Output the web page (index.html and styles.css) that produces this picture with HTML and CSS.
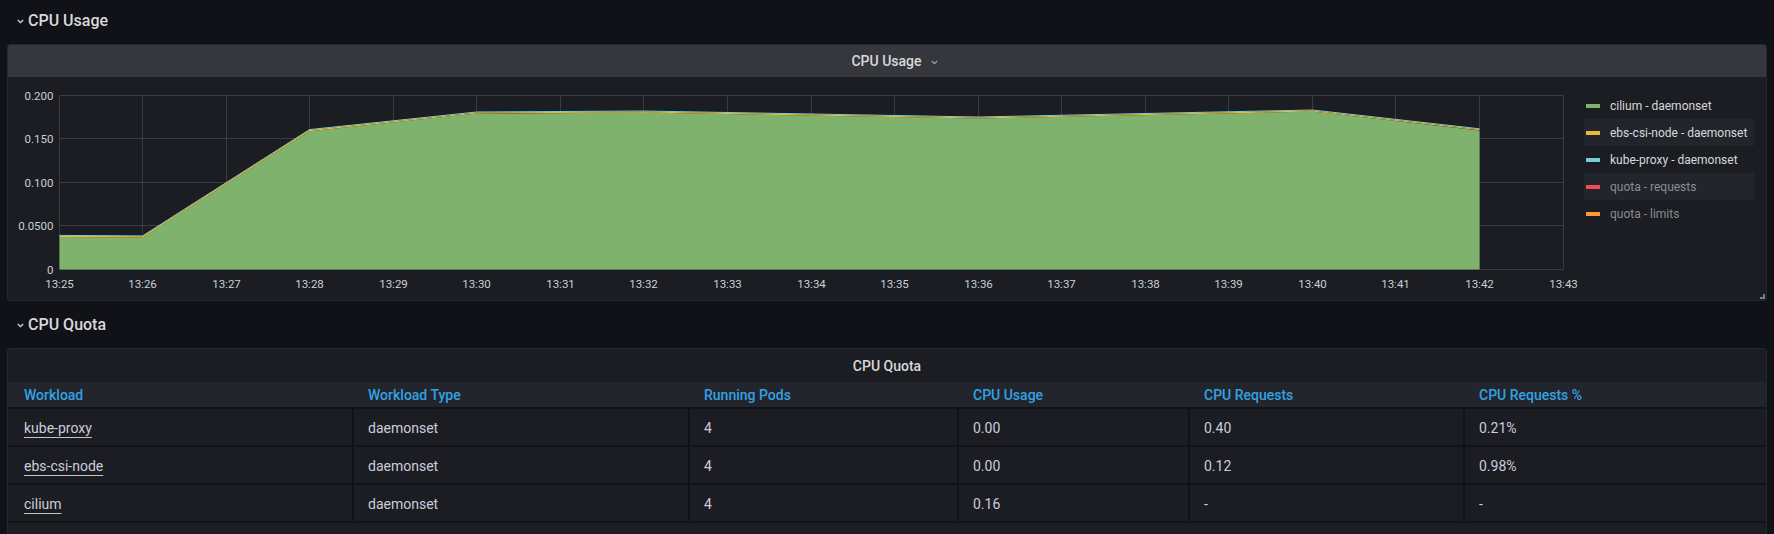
FILE: index.html
```html
<!DOCTYPE html>
<html>
<head>
<meta charset="utf-8">
<title>CPU</title>
<link rel="stylesheet" href="styles.css">
</head>
<body>
<div class="dash">
  <div class="row-head">
    <svg class="row-chev" width="7" height="5" viewBox="0 0 7 5"><polyline points="0.8,1 3.5,3.7 6.2,1"/></svg>
    <span class="row-title">CPU Usage</span>
  </div>

  <section class="panel panel-graph">
    <header class="panel-head">
      <span class="panel-title">CPU Usage</span>
      <svg class="title-chev" width="7" height="5" viewBox="0 0 7 5"><polyline points="0.8,1 3.5,3.7 6.2,1"/></svg>
    </header>
    <div class="graph-body">
      <svg class="plot" width="1570" height="223" viewBox="8 77 1570 223">
        <g class="grid">
          <line x1="59.5" y1="95.5" x2="59.5" y2="269.5"/>
          <line x1="142.5" y1="95.5" x2="142.5" y2="269.5"/>
          <line x1="226.5" y1="95.5" x2="226.5" y2="269.5"/>
          <line x1="309.5" y1="95.5" x2="309.5" y2="269.5"/>
          <line x1="393.5" y1="95.5" x2="393.5" y2="269.5"/>
          <line x1="476.5" y1="95.5" x2="476.5" y2="269.5"/>
          <line x1="560.5" y1="95.5" x2="560.5" y2="269.5"/>
          <line x1="643.5" y1="95.5" x2="643.5" y2="269.5"/>
          <line x1="727.5" y1="95.5" x2="727.5" y2="269.5"/>
          <line x1="811.5" y1="95.5" x2="811.5" y2="269.5"/>
          <line x1="894.5" y1="95.5" x2="894.5" y2="269.5"/>
          <line x1="978.5" y1="95.5" x2="978.5" y2="269.5"/>
          <line x1="1061.5" y1="95.5" x2="1061.5" y2="269.5"/>
          <line x1="1145.5" y1="95.5" x2="1145.5" y2="269.5"/>
          <line x1="1228.5" y1="95.5" x2="1228.5" y2="269.5"/>
          <line x1="1312.5" y1="95.5" x2="1312.5" y2="269.5"/>
          <line x1="1395.5" y1="95.5" x2="1395.5" y2="269.5"/>
          <line x1="1479.5" y1="95.5" x2="1479.5" y2="269.5"/>
          <line x1="1563.5" y1="95.5" x2="1563.5" y2="269.5"/>
          <line x1="59.5" y1="95.5" x2="1563.5" y2="95.5"/>
          <line x1="59.5" y1="138.5" x2="1563.5" y2="138.5"/>
          <line x1="59.5" y1="182.5" x2="1563.5" y2="182.5"/>
          <line x1="59.5" y1="225.5" x2="1563.5" y2="225.5"/>
          <line x1="59.5" y1="269.5" x2="1563.5" y2="269.5"/>
        </g>
        <polygon class="area-green" points="59.5,269.5 59.5,237 142.5,237.5 309.5,131.2 476.5,113.6 643.5,112.6 978.5,118.6 1312.5,111.6 1479.5,130.4 1479.5,269.5"/>
        <polyline class="ln-cyan" points="59.5,235.4 142.5,235.9 309.5,129.6 476.5,112 643.5,111 978.5,117 1312.5,110 1479.5,128.8"/>
        <polyline class="ln-yellow" points="59.5,236.4 142.5,236.9 309.5,130.6 476.5,113 643.5,112 978.5,118 1312.5,111 1479.5,129.8"/>
        <g class="ylab">
          <text x="53.5" y="95.5">0.200</text>
          <text x="53.5" y="138.5">0.150</text>
          <text x="53.5" y="182.5">0.100</text>
          <text x="53.5" y="225.5">0.0500</text>
          <text x="53.5" y="269.5">0</text>
        </g>
        <g class="xlab">
          <text x="59.5" y="284">13:25</text>
          <text x="142.5" y="284">13:26</text>
          <text x="226.5" y="284">13:27</text>
          <text x="309.5" y="284">13:28</text>
          <text x="393.5" y="284">13:29</text>
          <text x="476.5" y="284">13:30</text>
          <text x="560.5" y="284">13:31</text>
          <text x="643.5" y="284">13:32</text>
          <text x="727.5" y="284">13:33</text>
          <text x="811.5" y="284">13:34</text>
          <text x="894.5" y="284">13:35</text>
          <text x="978.5" y="284">13:36</text>
          <text x="1061.5" y="284">13:37</text>
          <text x="1145.5" y="284">13:38</text>
          <text x="1228.5" y="284">13:39</text>
          <text x="1312.5" y="284">13:40</text>
          <text x="1395.5" y="284">13:41</text>
          <text x="1479.5" y="284">13:42</text>
          <text x="1563.5" y="284">13:43</text>
        </g>
      </svg>
      <ul class="legend">
        <li class="lg"><i class="sw sw-green"></i>cilium - daemonset</li>
        <li class="lg lg-hl"><i class="sw sw-yellow"></i>ebs-csi-node - daemonset</li>
        <li class="lg"><i class="sw sw-cyan"></i>kube-proxy - daemonset</li>
        <li class="lg lg-hl lg-off"><i class="sw sw-red"></i>quota - requests</li>
        <li class="lg lg-off"><i class="sw sw-orange"></i>quota - limits</li>
      </ul>
    </div>
    <div class="resize"></div>
  </section>

  <div class="row-head">
    <svg class="row-chev" width="7" height="5" viewBox="0 0 7 5"><polyline points="0.8,1 3.5,3.7 6.2,1"/></svg>
    <span class="row-title">CPU Quota</span>
  </div>

  <section class="panel panel-table">
    <header class="table-title">CPU Quota</header>
    <table class="quota">
      <colgroup>
        <col class="w1"><col class="w2"><col class="w3"><col class="w4"><col class="w5"><col class="w6">
      </colgroup>
      <thead>
        <tr><th>Workload</th><th>Workload Type</th><th>Running Pods</th><th>CPU Usage</th><th>CPU Requests</th><th>CPU Requests %</th></tr>
      </thead>
      <tbody>
        <tr><td><span class="link">kube-proxy</span></td><td>daemonset</td><td>4</td><td>0.00</td><td>0.40</td><td>0.21%</td></tr>
        <tr><td><span class="link">ebs-csi-node</span></td><td>daemonset</td><td>4</td><td>0.00</td><td>0.12</td><td>0.98%</td></tr>
        <tr class="last"><td><span class="link">cilium</span></td><td>daemonset</td><td>4</td><td>0.16</td><td>-</td><td>-</td></tr>
      </tbody>
    </table>
  </section>
</div>
</body>
</html>
```

FILE: styles.css
```css
* { box-sizing: border-box; }
html, body {
  margin: 0;
  padding: 0;
  overflow: hidden;
  height: 100%;
  background: #111217;
  font-family: Roboto, "Noto Sans", Arial, sans-serif;
  color: #ccccdc;
}
.dash {
  padding: 0 7px;
}
.row-head {
  height: 40px;
  display: flex;
  align-items: center;
  padding-left: 10px;
}
.row-chev {
  fill: none;
  stroke: #d8d9da;
  stroke-width: 1.3;
  margin-right: 4px;
  margin-top: 2px;
}
.row-title {
  font-size: 16px;
  font-weight: 500;
  color: #d8d9da;
}
.panel {
  background: #1b1d22;
  border: 1px solid #25282d;
  border-radius: 3px;
  position: relative;
}
.panel-graph {
  height: 257px;
  margin: 4px 0 3px;
}
.panel-head {
  height: 32px;
  background: #35373c;
  display: flex;
  align-items: center;
  justify-content: center;
  border-radius: 2px 2px 0 0;
}
.panel-title {
  font-size: 14px;
  font-weight: 500;
  color: #d8d9da;
  margin-left: 15px;
}
.title-chev {
  fill: none;
  stroke: #9fa1a6;
  stroke-width: 1.2;
  margin-left: 9px;
  margin-top: 2px;
}
.graph-body {
  display: flex;
  height: 223px;
}
.plot {
  display: block;
  flex: none;
}
.grid line {
  stroke: #3a3c41;
  stroke-width: 1;
}
.area-green {
  fill: #7eb26d;
}
.ln-yellow {
  fill: none;
  stroke: #eab839;
  stroke-width: 1.1;
}
.ln-cyan {
  fill: none;
  stroke: #6ed0e0;
  stroke-width: 1;
}
.ylab text {
  font-size: 11.5px;
  fill: #c7d0d9;
  text-anchor: end;
  dominant-baseline: central;
}
.xlab text {
  font-size: 11.5px;
  fill: #c7d0d9;
  text-anchor: middle;
  dominant-baseline: central;
}
.legend {
  list-style: none;
  margin: 15px 0 0 6px;
  padding: 0;
  width: 170px;
}
.lg {
  height: 27px;
  display: flex;
  align-items: center;
  padding-left: 2px;
  font-size: 12px;
  color: #d8d9da;
  white-space: nowrap;
}
.lg-hl {
  background: #22252b;
}
.lg-off {
  color: #8a8c90;
}
.sw {
  display: inline-block;
  width: 14px;
  height: 4px;
  margin-right: 10px;
}
.sw-green { background: #7eb26d; }
.sw-yellow { background: #eab839; }
.sw-cyan { background: #6ed0e0; }
.sw-red { background: #f2495c; }
.sw-orange { background: #ff9830; }
.resize {
  position: absolute;
  right: 1px;
  bottom: 1px;
  width: 5px;
  height: 5px;
  border-right: 2px solid #7b7d82;
  border-bottom: 2px solid #7b7d82;
}
.panel-table {
  height: 240px;
  margin-top: 4px;
}
.table-title {
  height: 33px;
  display: flex;
  align-items: center;
  justify-content: center;
  font-size: 14px;
  font-weight: 500;
  color: #d8d9da;
}
.quota {
  width: 100%;
  table-layout: fixed;
  border-collapse: separate;
  border-spacing: 0;
  font-size: 14px;
}
.w1 { width: 344px; }
.w2 { width: 336px; }
.w3 { width: 269px; }
.w4 { width: 231px; }
.w5 { width: 275px; }
.w6 { width: 303px; }
.quota th {
  background: #22252b;
  color: #33a2e5;
  font-weight: 500;
  text-align: left;
  padding: 2px 16px 0;
  line-height: 23px;
  white-space: nowrap;
}
.quota td {
  padding: 3px 14px 0;
  line-height: 33px;
  border-top: 2px solid #111217;
  border-left: 2px solid #111217;
  color: #ccccdc;
  white-space: nowrap;
}
.quota td:first-child {
  border-left: 0;
  padding-left: 16px;
}
.quota .last td {
  border-bottom: 2px solid #111217;
}
.link {
  text-decoration: underline;
  text-decoration-color: #c4c5c9;
  text-decoration-thickness: 1px;
  text-underline-offset: 4px;
}
```
